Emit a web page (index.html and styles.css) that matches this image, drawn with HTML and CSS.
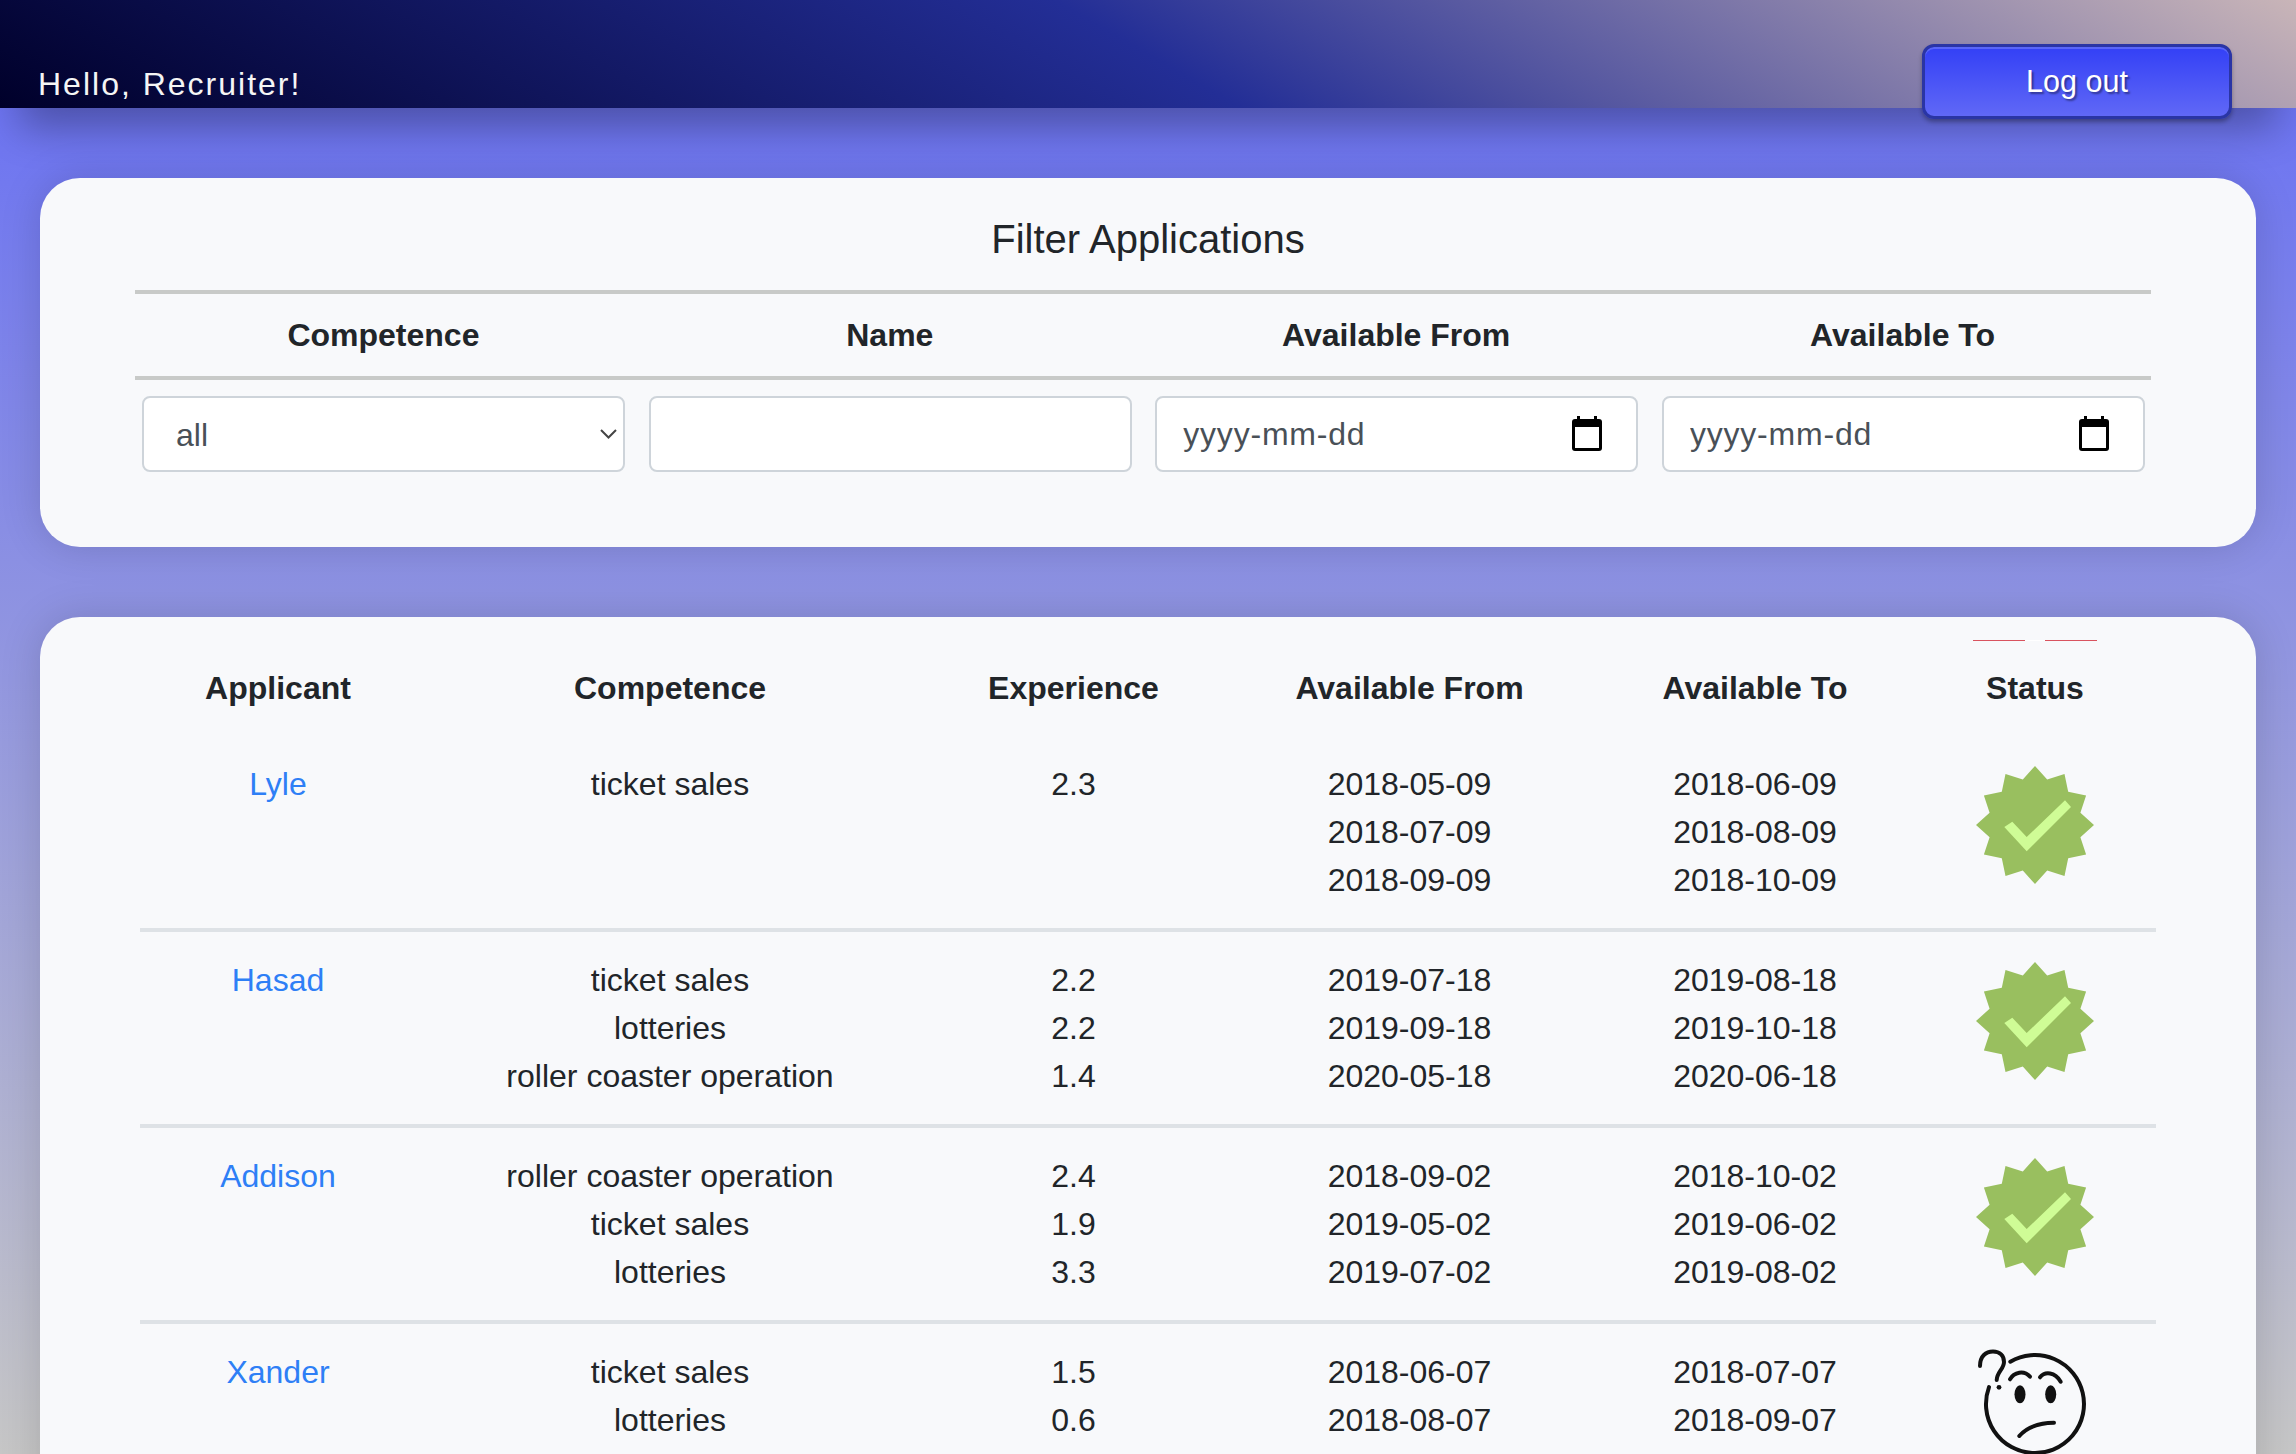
FILE: index.html
```html
<!DOCTYPE html>
<html lang="en">
<head>
  <meta charset="UTF-8" />
  <meta name="viewport" content="width=device-width, initial-scale=1.0" />
  <title>Applications</title>
  <link rel="stylesheet" href="styles.css">
</head>
<body>
  <svg class="defs" width="0" height="0" aria-hidden="true">
    <defs>
      <symbol id="badge" viewBox="0 0 118 118">
        <polygon fill="#99bf5f" points="59,0 71.2,13.6 88.5,7.9 92.2,25.8 110.1,29.5 104.4,46.8 118,59 104.4,71.2 110.1,88.5 92.2,92.2 88.5,110.1 71.2,104.4 59,118 46.8,104.4 29.5,110.1 25.8,92.2 7.9,88.5 13.6,71.2 0,59 13.6,46.8 7.9,29.5 25.8,25.8 29.5,7.9 46.8,13.6" />
        <polygon fill="#cffc96" points="28.3,61 36.3,55.7 50.7,71 89,34.3 95,41 50.7,85.3" />
      </symbol>
      <symbol id="calendar" viewBox="0 0 30 35">
        <rect x="5" y="0" width="3" height="5" fill="#000" />
        <rect x="22" y="0" width="3" height="5" fill="#000" />
        <rect x="0" y="3" width="30" height="32" rx="3" fill="#000" />
        <rect x="3" y="11" width="24" height="21" fill="#fff" />
      </symbol>
    </defs>
  </svg>

  <header class="topbar">
    <span class="greeting">Hello, Recruiter!</span>
    <button class="logout">Log out</button>
  </header>

  <section class="card filter-card">
    <h2 class="filter-title">Filter Applications</h2>
    <div class="filter-head">
      <div>Competence</div>
      <div>Name</div>
      <div>Available From</div>
      <div>Available To</div>
    </div>
    <div class="filter-fields">
      <div class="field select-field">
        <select class="field-input">
          <option>all</option>
        </select>
        <svg class="chevron" width="17" height="10" viewBox="0 0 17 10"><path d="M1 1l7.5 7.5L16 1" fill="none" stroke="#444" stroke-width="2" /></svg>
      </div>
      <div class="field">
        <input class="field-input" type="text">
      </div>
      <div class="field date-field">
        <input class="field-input" type="text" placeholder="yyyy-mm-dd">
        <svg class="calendar" width="30" height="35"><use href="#calendar" /></svg>
      </div>
      <div class="field date-field">
        <input class="field-input" type="text" placeholder="yyyy-mm-dd">
        <svg class="calendar" width="30" height="35"><use href="#calendar" /></svg>
      </div>
    </div>
  </section>

  <section class="card list-card">
    <div class="pager"><span class="pager-line"></span><span class="pager-gap"></span><span class="pager-line"></span></div>
    <table class="applications">
      <colgroup>
        <col class="col-name">
        <col class="col-competence">
        <col class="col-experience">
        <col class="col-from">
        <col class="col-to">
        <col class="col-status">
      </colgroup>
      <thead>
        <tr>
          <th>Applicant</th>
          <th>Competence</th>
          <th>Experience</th>
          <th>Available From</th>
          <th>Available To</th>
          <th>Status</th>
        </tr>
      </thead>
      <tbody>
        <tr>
          <td><a href="#">Lyle</a></td>
          <td>ticket sales</td>
          <td>2.3</td>
          <td><div>2018-05-09</div><div>2018-07-09</div><div>2018-09-09</div></td>
          <td><div>2018-06-09</div><div>2018-08-09</div><div>2018-10-09</div></td>
          <td><svg class="status-badge" width="118" height="118"><use href="#badge" /></svg></td>
        </tr>
        <tr>
          <td><a href="#">Hasad</a></td>
          <td><div>ticket sales</div><div>lotteries</div><div>roller coaster operation</div></td>
          <td><div>2.2</div><div>2.2</div><div>1.4</div></td>
          <td><div>2019-07-18</div><div>2019-09-18</div><div>2020-05-18</div></td>
          <td><div>2019-08-18</div><div>2019-10-18</div><div>2020-06-18</div></td>
          <td><svg class="status-badge" width="118" height="118"><use href="#badge" /></svg></td>
        </tr>
        <tr>
          <td><a href="#">Addison</a></td>
          <td><div>roller coaster operation</div><div>ticket sales</div><div>lotteries</div></td>
          <td><div>2.4</div><div>1.9</div><div>3.3</div></td>
          <td><div>2018-09-02</div><div>2019-05-02</div><div>2019-07-02</div></td>
          <td><div>2018-10-02</div><div>2019-06-02</div><div>2019-08-02</div></td>
          <td><svg class="status-badge" width="118" height="118"><use href="#badge" /></svg></td>
        </tr>
        <tr>
          <td><a href="#">Xander</a></td>
          <td><div>ticket sales</div><div>lotteries</div></td>
          <td><div>1.5</div><div>0.6</div></td>
          <td><div>2018-06-07</div><div>2018-08-07</div></td>
          <td><div>2018-07-07</div><div>2018-09-07</div></td>
          <td>
            <svg class="status-face" width="118" height="118" viewBox="0 0 118 118" fill="none" stroke="#111" stroke-width="4" stroke-linecap="round">
              <path d="M34.3 13.7A49 49 0 1 1 13 39.1" />
              <path d="M4 18C4 8 10 3.5 17 3.5C24 3.5 28 8 28 14C28 21 21 24 20.7 32" />
              <circle cx="23" cy="39.3" r="2.4" fill="#111" stroke="none" />
              <path d="M34 31.3C38 24 48 22 54 28.7" />
              <path d="M64 29.3C69 23 79 24 84.7 33.7" />
              <ellipse cx="44" cy="46.3" rx="5.5" ry="9" fill="#111" stroke="none" />
              <ellipse cx="74.7" cy="46.3" rx="5.5" ry="9" fill="#111" stroke="none" />
              <path d="M43.3 88C50 80 62 75 78 74.7" />
            </svg>
          </td>
        </tr>
      </tbody>
    </table>
  </section>
</body>
</html>
```

FILE: styles.css
```css
* {
  box-sizing: border-box;
}
html, body {
  height: 100%;
}
body {
  margin: 0;
  height: 100vh;
  overflow: hidden;
  display: flex;
  flex-direction: column;
  font-family: "Liberation Sans", Arial, sans-serif;
  font-size: 32px;
  line-height: 48px;
  color: #212529;
  background: linear-gradient(180deg, #666ef5 0%, #c6c6c6 100%);
}
.defs {
  position: absolute;
}

.topbar {
  position: relative;
  z-index: 2;
  flex: none;
  height: 108px;
  padding: 0 64px 0 38px;
  display: flex;
  justify-content: space-between;
  align-items: flex-end;
  background: linear-gradient(30deg, #00002a 0%, #232e96 50%, #c9b5b8 100%);
  box-shadow: 0 40px 40px -20px rgba(0, 0, 0, 0.3);
}
.greeting {
  color: #f5f5f5;
  letter-spacing: 2px;
}
.logout {
  align-self: flex-start;
  flex: none;
  width: 310px;
  height: 75px;
  margin-top: 44px;
  margin-bottom: -11px;
  border: 3px solid #2a35a5;
  border-radius: 12px;
  font-family: inherit;
  font-size: 30.5px;
  color: #fff;
  text-shadow: 2px 2px 2px rgba(0, 0, 0, 0.4);
  background: linear-gradient(180deg, #3340f6 0%, #6068f6 100%);
  box-shadow: inset 0 2px 0 #5a66f8, 0 3px 4px rgba(0, 0, 0, 0.3);
}

.card {
  flex: none;
  margin: 70px 40px 0;
  background: #f8f9fb;
  border-radius: 40px;
  box-shadow: 0 0 40px rgba(0, 0, 0, 0.15);
}

.filter-card {
  height: 369px;
  padding: 37px 105px 0 95px;
}
.filter-title {
  margin: 0 -10px 27px 0;
  font-size: 40px;
  line-height: 48px;
  font-weight: 400;
  text-align: center;
}
.filter-head {
  display: grid;
  grid-template-columns: repeat(4, 1fr);
  column-gap: 23.5px;
  padding: 17px 7px;
  border-top: 4px solid #c8cac8;
  border-bottom: 4px solid #c8cac8;
  font-weight: 700;
  text-align: center;
}
.filter-fields {
  display: grid;
  grid-template-columns: repeat(4, 1fr);
  column-gap: 23.5px;
  padding: 16px 6px 0 7px;
}
.field {
  position: relative;
  height: 76px;
  background: #fff;
  border: 2px solid #ced4da;
  border-radius: 8px;
}
.field-input {
  width: 100%;
  height: 100%;
  padding: 0 26px;
  border: 0;
  outline: 0;
  background: transparent;
  font-family: inherit;
  font-size: 32px;
  color: #495057;
  appearance: none;
}
.field-input::placeholder {
  color: #495057;
  opacity: 1;
  letter-spacing: 0.8px;
}
.select-field .field-input {
  padding: 2px 26px 0 32px;
}
.chevron {
  position: absolute;
  top: 31px;
  right: 6px;
  pointer-events: none;
}
.calendar {
  position: absolute;
  top: 18px;
  right: 34px;
  pointer-events: none;
}

.list-card {
  position: relative;
  flex: 1;
  padding: 23px 100px 0;
}
.pager {
  position: absolute;
  top: 23px;
  right: 159px;
  display: flex;
  height: 1px;
}
.pager-line {
  width: 52px;
  background: #d9535f;
}
.pager-gap {
  width: 20px;
  background: #fff;
}
.applications {
  width: 2016px;
  table-layout: fixed;
  border-collapse: separate;
  border-spacing: 0;
  text-align: center;
}
.col-name { width: 276px; }
.col-competence { width: 508px; }
.col-experience { width: 299px; }
.col-from { width: 373px; }
.col-to { width: 318px; }
.col-status { width: 242px; }
.applications th {
  padding: 24px 0;
  font-weight: 700;
}
.applications td {
  padding: 24px 0;
  height: 192px;
  vertical-align: top;
}
.applications tbody tr + tr td {
  height: 196px;
  border-top: 4px solid #dee2e6;
}
.applications a {
  color: #2e7ff6;
  text-decoration: none;
}
.status-badge {
  display: block;
  margin: 6px auto 0;
}
.status-face {
  display: block;
  margin: 0 auto;
  overflow: visible;
}
```
